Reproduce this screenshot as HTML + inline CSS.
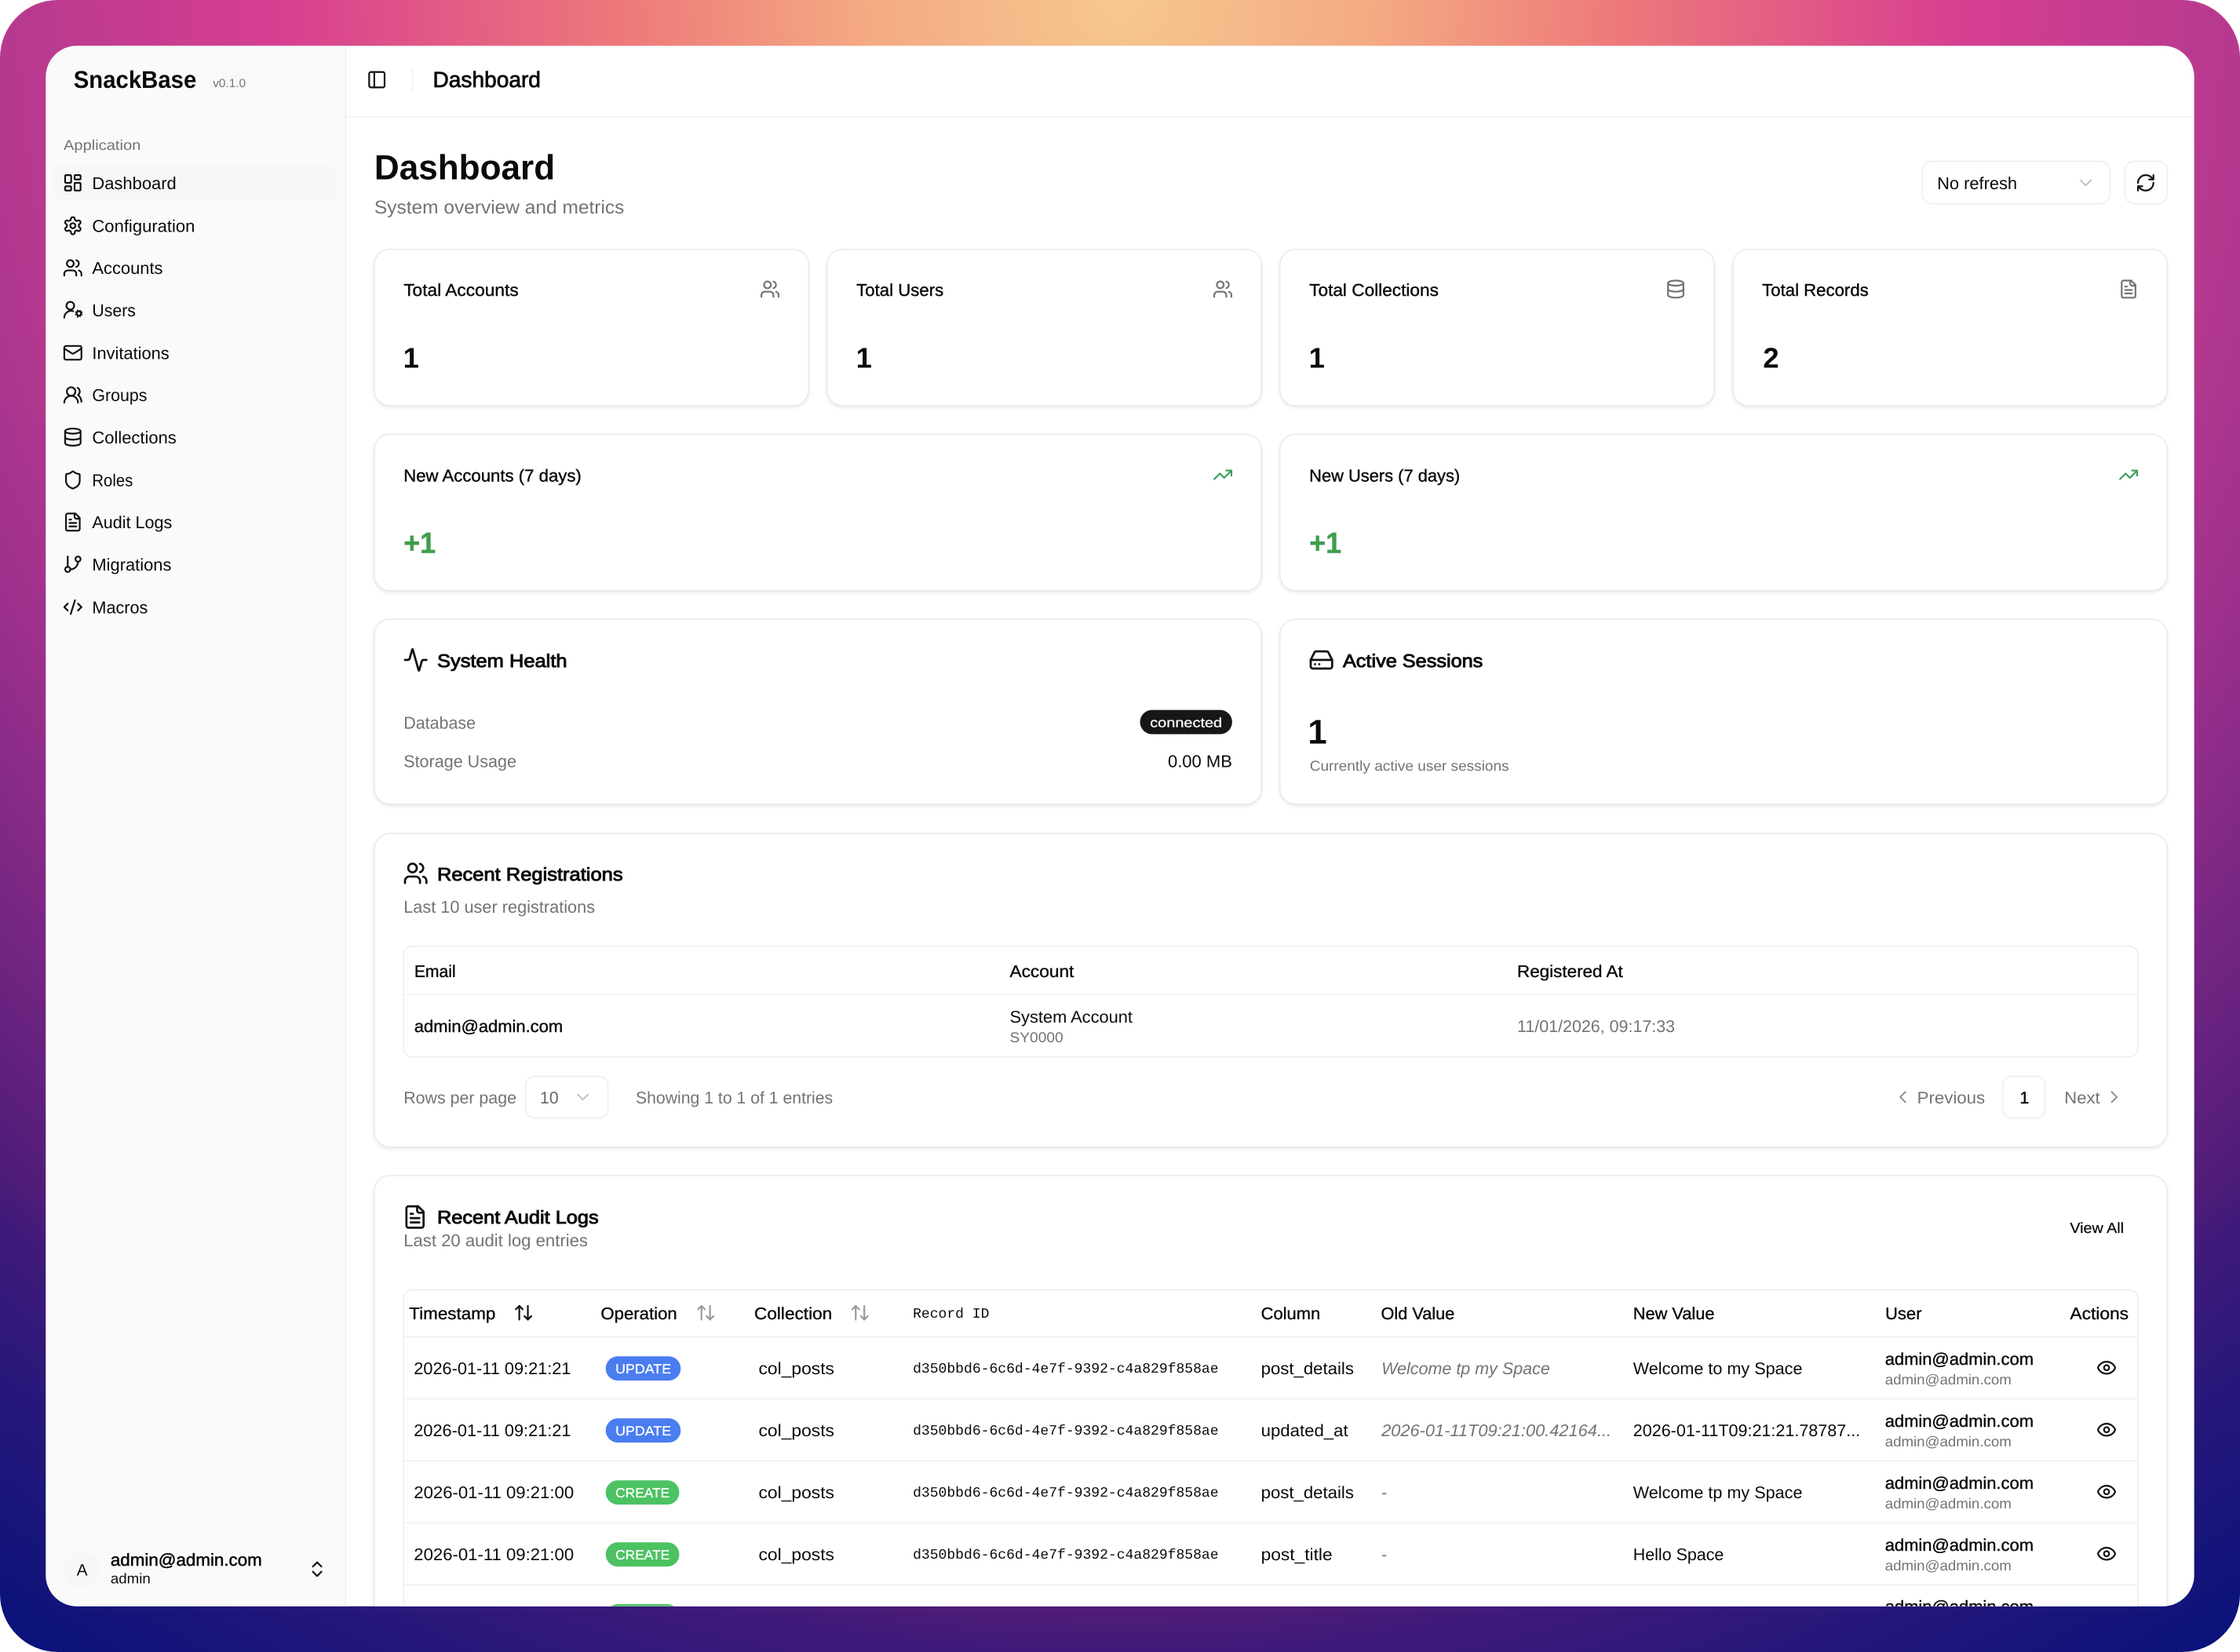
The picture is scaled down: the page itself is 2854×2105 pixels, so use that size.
<!DOCTYPE html>
<html lang="en"><head><meta charset="utf-8"><title>SnackBase Dashboard</title>
<style>
html,body{margin:0;padding:0;background:#fff;width:2854px;height:2105px;overflow:hidden}
svg{display:block}
text{font-family:"Liberation Sans",Arial,sans-serif;font-size:12px;fill:#0a0a0a;text-rendering:geometricPrecision;white-space:pre}
.g{fill:#737373}
.m{stroke:#0a0a0a;stroke-width:.22px}
.h{stroke:#0a0a0a;stroke-width:.5px;font-size:12.8px}
.b{font-weight:700}
.s{font-size:10px}
.mono{font-family:"Liberation Mono",monospace;font-size:9.9px}
.w{fill:#fff;stroke:#fff;stroke-width:.15px;font-size:9.3px}
.i{font-style:italic}
.ic{fill:none;stroke:#111;stroke-width:2;stroke-linecap:round;stroke-linejoin:round}
.ig{fill:none;stroke:#737373;stroke-width:2;stroke-linecap:round;stroke-linejoin:round}
.il{fill:none;stroke:#bcbcbc;stroke-width:1.7;stroke-linecap:round;stroke-linejoin:round}
.igr{fill:none;stroke:#3f9d5f;stroke-width:2;stroke-linecap:round;stroke-linejoin:round}
.card{fill:#fff;stroke:#e8e8e8;stroke-width:.7;filter:drop-shadow(0 1px 1.2px rgba(0,0,0,.09))}
.ctl{fill:#fff;stroke:#ececec;stroke-width:.6;filter:drop-shadow(0 .5px .6px rgba(0,0,0,.05))}
.line{stroke:#ebebeb;stroke-width:.6}
.tb{fill:#fff;stroke:#e8e8e8;stroke-width:.6}
.c{font-size:11.8px}
.th{font-size:11.8px;stroke:#0a0a0a;stroke-width:.2px}
</style></head><body>
<svg xmlns="http://www.w3.org/2000/svg" width="2854" height="2105" viewBox="0 0 1568 1156.5">
<defs>
<radialGradient id="bg" gradientUnits="userSpaceOnUse" cx="784" cy="0" r="1397">
<stop offset="0" stop-color="#f6c88f"/><stop offset=".132" stop-color="#f4a882"/><stop offset=".246" stop-color="#ee7a7a"/><stop offset=".42" stop-color="#d73f90"/><stop offset=".561" stop-color="#b5398f"/><stop offset=".639" stop-color="#9a2f8c"/><stop offset=".808" stop-color="#4f1c78"/><stop offset=".827" stop-color="#401a7a"/><stop offset=".895" stop-color="#25177a"/><stop offset="1" stop-color="#07127a"/>
</radialGradient>
<clipPath id="app"><rect x="32" y="32" width="1504" height="1092.5" rx="22"/></clipPath>
<g id="dash"><rect x="3" y="3" width="7" height="9" rx="1"/><rect x="14" y="3" width="7" height="5" rx="1"/><rect x="14" y="12" width="7" height="9" rx="1"/><rect x="3" y="16" width="7" height="5" rx="1"/></g>
<g id="cog"><path d="M12.22 2h-.44a2 2 0 0 0-2 2v.18a2 2 0 0 1-1 1.73l-.43.25a2 2 0 0 1-2 0l-.15-.08a2 2 0 0 0-2.73.73l-.22.38a2 2 0 0 0 .73 2.73l.15.1a2 2 0 0 1 1 1.72v.51a2 2 0 0 1-1 1.74l-.15.09a2 2 0 0 0-.73 2.73l.22.38a2 2 0 0 0 2.73.73l.15-.08a2 2 0 0 1 2 0l.43.25a2 2 0 0 1 1 1.73V20a2 2 0 0 0 2 2h.44a2 2 0 0 0 2-2v-.18a2 2 0 0 1 1-1.73l.43-.25a2 2 0 0 1 2 0l.15.08a2 2 0 0 0 2.73-.73l.22-.39a2 2 0 0 0-.73-2.73l-.15-.08a2 2 0 0 1-1-1.74v-.5a2 2 0 0 1 1-1.74l.15-.09a2 2 0 0 0 .73-2.73l-.22-.38a2 2 0 0 0-2.73-.73l-.15.08a2 2 0 0 1-2 0l-.43-.25a2 2 0 0 1-1-1.73V4a2 2 0 0 0-2-2z"/><circle cx="12" cy="12" r="3"/></g>
<g id="users"><path d="M16 21v-2a4 4 0 0 0-4-4H6a4 4 0 0 0-4 4v2"/><circle cx="9" cy="7" r="4"/><path d="M22 21v-2a4 4 0 0 0-3-3.87"/><path d="M16 3.13a4 4 0 0 1 0 7.75"/></g>
<g id="ucog"><path d="M2 21a8 8 0 0 1 10.434-7.62"/><circle cx="9" cy="7" r="4.5"/><circle cx="19" cy="16" r="2.5"/><path d="m20.5 12.9-.4.8M18 19.1l-.4.8M22.4 17.4l-.8-.3M16.4 14.9l-.8-.3M22.4 14.6l-.8.3M16.4 17.1l-.8.3M20.4 19.4l-.3-.8M17.9 13.4l-.3-.8"/></g>
<g id="mail"><rect x="2" y="4" width="20" height="16" rx="2"/><path d="m22 7-8.97 5.7a1.94 1.94 0 0 1-2.06 0L2 7"/></g>
<g id="groups"><path d="M18 21a8 8 0 0 0-16 0"/><circle cx="10" cy="8" r="5"/><path d="M22 20c0-3.37-2-6.5-4-8a5 5 0 0 0-.45-8.3"/></g>
<g id="db"><ellipse cx="12" cy="5" rx="9" ry="3"/><path d="M3 5V19A9 3 0 0 0 21 19V5"/><path d="M3 12A9 3 0 0 0 21 12"/></g>
<g id="shield"><path d="M20 13c0 5-3.5 7.5-7.66 8.95a1 1 0 0 1-.67-.01C7.5 20.5 4 18 4 13V6a1 1 0 0 1 1-1c2 0 4.5-1.2 6.24-2.72a1.17 1.17 0 0 1 1.52 0C14.51 3.81 17 5 19 5a1 1 0 0 1 1 1z"/></g>
<g id="file"><path d="M15 2H6a2 2 0 0 0-2 2v16a2 2 0 0 0 2 2h12a2 2 0 0 0 2-2V7Z"/><path d="M14 2v4a2 2 0 0 0 2 2h4"/><path d="M10 9H8"/><path d="M16 13H8"/><path d="M16 17H8"/></g>
<g id="branch"><path d="M6 3v12"/><circle cx="18" cy="6" r="3"/><circle cx="6" cy="18" r="3"/><path d="M18 9a9 9 0 0 1-9 9"/></g>
<g id="code"><path d="m18 16 4-4-4-4"/><path d="m6 8-4 4 4 4"/><path d="m14.5 4-5 16"/></g>
<g id="panel"><rect x="3" y="3" width="18" height="18" rx="2"/><path d="M9 3v18"/></g>
<g id="refresh"><path d="M3 12a9 9 0 0 1 9-9 9.75 9.75 0 0 1 6.74 2.74L21 8"/><path d="M21 3v5h-5"/><path d="M21 12a9 9 0 0 1-9 9 9.75 9.75 0 0 1-6.74-2.74L3 16"/><path d="M8 16H3v5"/></g>
<g id="cd"><path d="m6 9 6 6 6-6"/></g>
<g id="cl"><path d="m15 18-6-6 6-6"/></g>
<g id="cr"><path d="m9 18 6-6-6-6"/></g>
<g id="cud"><path d="m7 15 5 5 5-5"/><path d="m7 9 5-5 5 5"/></g>
<g id="trend"><path d="M22 7 13.5 15.5 8.5 10.5 2 17"/><path d="M16 7h6v6"/></g>
<g id="act"><path d="M22 12h-2.48a2 2 0 0 0-1.93 1.46l-2.35 8.36a.25.25 0 0 1-.48 0L9.24 2.18a.25.25 0 0 0-.48 0l-2.35 8.36A2 2 0 0 1 4.49 12H2"/></g>
<g id="hd"><path d="M22 12H2"/><path d="M5.45 5.11 2 12v6a2 2 0 0 0 2 2h16a2 2 0 0 0 2-2v-6l-3.45-6.89A2 2 0 0 0 16.76 4H7.24a2 2 0 0 0-1.79 1.11z"/><path d="M6 16h.01"/><path d="M10 16h.01"/></g>
<g id="sort"><path d="m21 16-4 4-4-4"/><path d="M17 20V4"/><path d="m3 8 4-4 4 4"/><path d="M7 4v16"/></g>
<g id="eye"><path d="M2.062 12.348a1 1 0 0 1 0-.696 10.75 10.75 0 0 1 19.876 0 1 1 0 0 1 0 .696 10.75 10.75 0 0 1-19.876 0"/><circle cx="12" cy="12" r="3"/></g>
</defs>

<rect x="0" y="0" width="1568" height="1156.5" rx="40.5" fill="url(#bg)"/>

<g clip-path="url(#app)">
<rect x="32" y="32" width="1504" height="1093" fill="#fff"/>
<!-- sidebar -->
<rect x="32" y="32" width="210" height="1093" fill="#fafafa"/>
<line x1="242" y1="32" x2="242" y2="1125" stroke="#ececec" stroke-width=".7"/>
<text x="51.5" y="61.5" style="font-size:17px" class="b" textLength="86" lengthAdjust="spacingAndGlyphs">SnackBase</text>
<rect x="144" y="49" width="34" height="15" rx="7.5" fill="#f8f8f8"/>
<text x="149" y="61" style="font-size:8.4px" class="g" textLength="23" lengthAdjust="spacingAndGlyphs">v0.1.0</text>
<text x="44.5" y="105" class="g" style="font-size:10px" textLength="54" lengthAdjust="spacingAndGlyphs">Application</text>
<rect x="37" y="115" width="198" height="26" rx="6" fill="#f7f7f7"/>
<g class="ic">
<use href="#dash" transform="translate(43.8 120.8) scale(.6)"/>
<use href="#cog" transform="translate(43.8 150.8) scale(.6)"/>
<use href="#users" transform="translate(43.8 180.3) scale(.6)"/>
<use href="#ucog" transform="translate(43.8 209.8) scale(.6)"/>
<use href="#mail" transform="translate(43.8 239.8) scale(.6)"/>
<use href="#groups" transform="translate(43.8 269.3) scale(.6)"/>
<use href="#db" transform="translate(43.8 298.8) scale(.6)"/>
<use href="#shield" transform="translate(43.8 328.8) scale(.6)"/>
<use href="#file" transform="translate(43.8 358.3) scale(.6)"/>
<use href="#branch" transform="translate(43.8 387.8) scale(.6)"/>
<use href="#code" transform="translate(43.8 417.8) scale(.6)"/>
</g>
<text x="64.5" y="132.5" textLength="59" lengthAdjust="spacingAndGlyphs">Dashboard</text>
<text x="64.5" y="162.3" textLength="72" lengthAdjust="spacingAndGlyphs">Configuration</text>
<text x="64.5" y="191.8" textLength="49.5" lengthAdjust="spacingAndGlyphs">Accounts</text>
<text x="64.5" y="221.3" textLength="30.5" lengthAdjust="spacingAndGlyphs">Users</text>
<text x="64.5" y="251.3" textLength="54" lengthAdjust="spacingAndGlyphs">Invitations</text>
<text x="64.5" y="280.8" textLength="38.5" lengthAdjust="spacingAndGlyphs">Groups</text>
<text x="64.5" y="310.3" textLength="59" lengthAdjust="spacingAndGlyphs">Collections</text>
<text x="64.5" y="340.3" textLength="28.5" lengthAdjust="spacingAndGlyphs">Roles</text>
<text x="64.5" y="369.8" textLength="56" lengthAdjust="spacingAndGlyphs">Audit Logs</text>
<text x="64.5" y="399.3" textLength="55.5" lengthAdjust="spacingAndGlyphs">Migrations</text>
<text x="64.5" y="429.3" textLength="39" lengthAdjust="spacingAndGlyphs">Macros</text>
<circle cx="57.5" cy="1099" r="13" fill="#f7f7f7"/>
<text x="53.7" y="1103" style="font-size:11.5px" textLength="7.6" lengthAdjust="spacingAndGlyphs">A</text>
<text x="77.4" y="1096" class="m" style="font-size:12px;stroke-width:.3px" textLength="106" lengthAdjust="spacingAndGlyphs">admin@admin.com</text>
<text x="77.4" y="1108.5" class="s" textLength="28" lengthAdjust="spacingAndGlyphs">admin</text>
<use href="#cud" class="ic" transform="translate(214.8 1091.3) scale(.6)"/>

<!-- header -->
<line x1="242" y1="81.8" x2="1536" y2="81.8" class="line"/>
<use href="#panel" class="ic" transform="translate(256.6 48.6) scale(.6)"/>
<line x1="288.8" y1="48" x2="288.8" y2="64" class="line"/>
<text x="303" y="61" class="m" style="font-size:15.4px;stroke-width:.42px" textLength="75.5" lengthAdjust="spacingAndGlyphs">Dashboard</text>

<text x="262" y="125.6" class="b" style="font-size:24.5px" textLength="126.5" lengthAdjust="spacingAndGlyphs">Dashboard</text>
<text x="262" y="149.4" class="g" style="font-size:13px" textLength="175" lengthAdjust="spacingAndGlyphs">System overview and metrics</text>
<rect x="1345.7" y="113" width="131.3" height="29.5" rx="6.5" class="ctl"/>
<text x="1356" y="132.5" textLength="56" lengthAdjust="spacingAndGlyphs">No refresh</text>
<use href="#cd" class="il" transform="translate(1452.8 120.8) scale(.6)"/>
<rect x="1487.5" y="113" width="29.5" height="29.5" rx="6.5" class="ctl"/>
<use href="#refresh" class="ic" transform="translate(1494.8 120.8) scale(.6)"/>

<!-- stat cards -->
<rect x="262" y="174.5" width="304" height="109.5" rx="11" class="card"/>
<rect x="579" y="174.5" width="304" height="109.5" rx="11" class="card"/>
<rect x="896" y="174.5" width="304" height="109.5" rx="11" class="card"/>
<rect x="1213" y="174.5" width="304" height="109.5" rx="11" class="card"/>
<text x="282.5" y="207" class="m" textLength="80.5" lengthAdjust="spacingAndGlyphs">Total Accounts</text>
<text x="599.5" y="207" class="m" textLength="61" lengthAdjust="spacingAndGlyphs">Total Users</text>
<text x="916.5" y="207" class="m" textLength="90.5" lengthAdjust="spacingAndGlyphs">Total Collections</text>
<text x="1233.5" y="207" class="m" textLength="74.5" lengthAdjust="spacingAndGlyphs">Total Records</text>
<use href="#users" class="ig" transform="translate(531.8 195.2) scale(.6)"/>
<use href="#users" class="ig" transform="translate(848.8 195.2) scale(.6)"/>
<use href="#db" class="ig" transform="translate(1165.8 195.2) scale(.6)"/>
<use href="#file" class="ig" transform="translate(1482.8 195.2) scale(.6)"/>
<text x="282.2" y="257.5" class="b" style="font-size:20px">1</text>
<text x="599.2" y="257.5" class="b" style="font-size:20px">1</text>
<text x="916.2" y="257.5" class="b" style="font-size:20px">1</text>
<text x="1234.2" y="257.5" class="b" style="font-size:20px">2</text>

<rect x="262" y="304" width="621" height="109.5" rx="11" class="card"/>
<rect x="896" y="304" width="621" height="109.5" rx="11" class="card"/>
<text x="282.5" y="337" class="m" textLength="124.5" lengthAdjust="spacingAndGlyphs">New Accounts (7 days)</text>
<text x="916.5" y="337" class="m" textLength="105.5" lengthAdjust="spacingAndGlyphs">New Users (7 days)</text>
<use href="#trend" class="igr" transform="translate(848.8 325.2) scale(.6)"/>
<use href="#trend" class="igr" transform="translate(1482.8 325.2) scale(.6)"/>
<text x="282.5" y="387.2" class="b" style="font-size:20.5px;fill:#3f9d4c;stroke:#3f9d4c;stroke-width:.25px" textLength="22.5" lengthAdjust="spacingAndGlyphs">+1</text>
<text x="916.5" y="387.2" class="b" style="font-size:20.5px;fill:#3f9d4c;stroke:#3f9d4c;stroke-width:.25px" textLength="22.5" lengthAdjust="spacingAndGlyphs">+1</text>

<!-- health -->
<rect x="262" y="433.5" width="621" height="129.5" rx="11" class="card"/>
<rect x="896" y="433.5" width="621" height="129.5" rx="11" class="card"/>
<use href="#act" class="ic" transform="translate(282 453) scale(.75)"/>
<text x="306" y="467" class="h" textLength="91" lengthAdjust="spacingAndGlyphs">System Health</text>
<text x="282.5" y="510" class="g" textLength="50.5" lengthAdjust="spacingAndGlyphs">Database</text>
<text x="282.5" y="537" class="g" textLength="79" lengthAdjust="spacingAndGlyphs">Storage Usage</text>
<rect x="798" y="497" width="64.5" height="17" rx="8.5" fill="#171717"/>
<text x="805" y="509" class="w" textLength="50.5" lengthAdjust="spacingAndGlyphs">connected</text>
<text x="817.5" y="537" textLength="45" lengthAdjust="spacingAndGlyphs">0.00 MB</text>
<use href="#hd" class="ic" transform="translate(916 453) scale(.75)"/>
<text x="940" y="467" class="h" textLength="98" lengthAdjust="spacingAndGlyphs">Active Sessions</text>
<text x="915.5" y="520.5" class="b" style="font-size:24px">1</text>
<text x="916.8" y="539.5" class="g s" textLength="139.5" lengthAdjust="spacingAndGlyphs">Currently active user sessions</text>

<!-- registrations -->
<rect x="262" y="583.5" width="1255" height="219.5" rx="11" class="card"/>
<use href="#users" class="ic" transform="translate(282 602.4) scale(.75)"/>
<text x="306" y="616.4" class="h" textLength="130" lengthAdjust="spacingAndGlyphs">Recent Registrations</text>
<text x="282.5" y="639" class="g" textLength="134" lengthAdjust="spacingAndGlyphs">Last 10 user registrations</text>
<rect x="282.5" y="662.5" width="1214" height="77.5" rx="6" class="tb"/>
<line x1="282.5" y1="696.3" x2="1496.5" y2="696.3" class="line"/>
<text x="290" y="684" class="th" textLength="29" lengthAdjust="spacingAndGlyphs">Email</text>
<text x="706.8" y="684" class="th" textLength="45" lengthAdjust="spacingAndGlyphs">Account</text>
<text x="1062" y="684" class="th" textLength="74" lengthAdjust="spacingAndGlyphs">Registered At</text>
<text x="290" y="722.4" class="c m" textLength="104" lengthAdjust="spacingAndGlyphs">admin@admin.com</text>
<text x="706.8" y="716" class="c" textLength="86" lengthAdjust="spacingAndGlyphs">System Account</text>
<text x="706.8" y="729.5" class="g" style="font-size:10px" textLength="37.5" lengthAdjust="spacingAndGlyphs">SY0000</text>
<text x="1062" y="722.4" class="g c" textLength="110.5" lengthAdjust="spacingAndGlyphs">11/01/2026, 09:17:33</text>
<text x="282.5" y="772.4" class="g c" textLength="79" lengthAdjust="spacingAndGlyphs">Rows per page</text>
<rect x="368" y="753.6" width="57.5" height="29" rx="6" class="ctl"/>
<text x="378" y="772.4" class="c" style="fill:#666" textLength="13" lengthAdjust="spacingAndGlyphs">10</text>
<use href="#cd" class="il" transform="translate(400.8 760.8) scale(.6)"/>
<text x="445" y="772.4" class="g c" textLength="138" lengthAdjust="spacingAndGlyphs">Showing 1 to 1 of 1 entries</text>
<use href="#cl" class="il" transform="translate(1324.8 760.8) scale(.6)" style="stroke:#8a8a8a"/>
<text x="1342" y="772.4" class="g c" textLength="47.5" lengthAdjust="spacingAndGlyphs">Previous</text>
<rect x="1402" y="753.6" width="29.5" height="29" rx="6" class="ctl"/>
<text x="1413.8" y="772.4" class="c m">1</text>
<text x="1445" y="772.4" class="g c" textLength="25" lengthAdjust="spacingAndGlyphs">Next</text>
<use href="#cr" class="il" transform="translate(1472.8 760.8) scale(.6)" style="stroke:#8a8a8a"/>

<!-- audit logs -->
<rect x="262" y="823" width="1255" height="330" rx="11" class="card"/>
<use href="#file" class="ic" transform="translate(281.5 843) scale(.75)"/>
<text x="306" y="856.4" class="h" textLength="113" lengthAdjust="spacingAndGlyphs">Recent Audit Logs</text>
<text x="282.5" y="872.5" class="g" textLength="129" lengthAdjust="spacingAndGlyphs">Last 20 audit log entries</text>
<text x="1449" y="863" class="m" style="font-size:10.3px;stroke-width:.14px" textLength="37.7" lengthAdjust="spacingAndGlyphs">View All</text>
<rect x="282.5" y="903" width="1214" height="248" rx="6" class="tb"/>
<line x1="282.5" y1="935.8" x2="1496.5" y2="935.8" class="line"/>
<line x1="282.5" y1="979.2" x2="1496.5" y2="979.2" class="line"/>
<line x1="282.5" y1="1022.6" x2="1496.5" y2="1022.6" class="line"/>
<line x1="282.5" y1="1066" x2="1496.5" y2="1066" class="line"/>
<line x1="282.5" y1="1109.4" x2="1496.5" y2="1109.4" class="line"/>
<text x="286.4" y="923.5" class="th" textLength="60.5" lengthAdjust="spacingAndGlyphs">Timestamp</text>
<use href="#sort" class="ic" transform="translate(359.3 911.8) scale(.6)"/>
<text x="420.5" y="923.5" class="th" textLength="53.5" lengthAdjust="spacingAndGlyphs">Operation</text>
<use href="#sort" class="ig" style="stroke:#9a9a9a" transform="translate(486.8 911.8) scale(.6)"/>
<text x="528" y="923.5" class="th" textLength="54.5" lengthAdjust="spacingAndGlyphs">Collection</text>
<use href="#sort" class="ig" style="stroke:#9a9a9a" transform="translate(594.8 911.8) scale(.6)"/>
<text x="639" y="922.5" class="mono" textLength="53.5" lengthAdjust="spacingAndGlyphs">Record ID</text>
<text x="882.7" y="923.5" class="th" textLength="41.5" lengthAdjust="spacingAndGlyphs">Column</text>
<text x="966.7" y="923.5" class="th" textLength="51.5" lengthAdjust="spacingAndGlyphs">Old Value</text>
<text x="1143.2" y="923.5" class="th" textLength="57" lengthAdjust="spacingAndGlyphs">New Value</text>
<text x="1319.7" y="923.5" class="th" textLength="25.5" lengthAdjust="spacingAndGlyphs">User</text>
<text x="1449" y="923.5" class="th" textLength="41" lengthAdjust="spacingAndGlyphs">Actions</text>

<!-- row 1 -->
<text x="289.7" y="962" class="c" textLength="110" lengthAdjust="spacingAndGlyphs">2026-01-11 09:21:21</text>
<rect x="424" y="949.5" width="52.5" height="17" rx="8.5" fill="#4a7df0"/>
<text x="430.8" y="961.5" class="w" textLength="39" lengthAdjust="spacingAndGlyphs">UPDATE</text>
<text x="531" y="962" class="c" textLength="53" lengthAdjust="spacingAndGlyphs">col_posts</text>
<text x="639" y="960.9" class="mono" textLength="214" lengthAdjust="spacingAndGlyphs">d350bbd6-6c6d-4e7f-9392-c4a829f858ae</text>
<text x="882.7" y="962" class="c" textLength="65" lengthAdjust="spacingAndGlyphs">post_details</text>
<text x="967" y="962" class="g i c" textLength="118" lengthAdjust="spacingAndGlyphs">Welcome tp my Space</text>
<text x="1143.2" y="962" class="c" textLength="118.5" lengthAdjust="spacingAndGlyphs">Welcome to my Space</text>
<text x="1319.5" y="955.3" class="c m" textLength="104" lengthAdjust="spacingAndGlyphs">admin@admin.com</text>
<text x="1319.5" y="969.2" class="g s" textLength="88.5" lengthAdjust="spacingAndGlyphs">admin@admin.com</text>
<use href="#eye" class="ic" transform="translate(1467.4 950.3) scale(.6)"/>

<!-- row 2 -->
<text x="289.7" y="1005.4" class="c" textLength="110" lengthAdjust="spacingAndGlyphs">2026-01-11 09:21:21</text>
<rect x="424" y="992.9" width="52.5" height="17" rx="8.5" fill="#4a7df0"/>
<text x="430.8" y="1004.9" class="w" textLength="39" lengthAdjust="spacingAndGlyphs">UPDATE</text>
<text x="531" y="1005.4" class="c" textLength="53" lengthAdjust="spacingAndGlyphs">col_posts</text>
<text x="639" y="1004.3" class="mono" textLength="214" lengthAdjust="spacingAndGlyphs">d350bbd6-6c6d-4e7f-9392-c4a829f858ae</text>
<text x="882.7" y="1005.4" class="c" textLength="61" lengthAdjust="spacingAndGlyphs">updated_at</text>
<text x="967" y="1005.4" class="g i c" textLength="161" lengthAdjust="spacingAndGlyphs">2026-01-11T09:21:00.42164...</text>
<text x="1143.2" y="1005.4" class="c" textLength="159" lengthAdjust="spacingAndGlyphs">2026-01-11T09:21:21.78787...</text>
<text x="1319.5" y="998.7" class="c m" textLength="104" lengthAdjust="spacingAndGlyphs">admin@admin.com</text>
<text x="1319.5" y="1012.6" class="g s" textLength="88.5" lengthAdjust="spacingAndGlyphs">admin@admin.com</text>
<use href="#eye" class="ic" transform="translate(1467.4 993.7) scale(.6)"/>

<!-- row 3 -->
<text x="289.7" y="1048.8" class="c" textLength="112" lengthAdjust="spacingAndGlyphs">2026-01-11 09:21:00</text>
<rect x="424" y="1036.3" width="51.5" height="17" rx="8.5" fill="#4cc262"/>
<text x="430.8" y="1048.3" class="w" textLength="38" lengthAdjust="spacingAndGlyphs">CREATE</text>
<text x="531" y="1048.8" class="c" textLength="53" lengthAdjust="spacingAndGlyphs">col_posts</text>
<text x="639" y="1047.7" class="mono" textLength="214" lengthAdjust="spacingAndGlyphs">d350bbd6-6c6d-4e7f-9392-c4a829f858ae</text>
<text x="882.7" y="1048.8" class="c" textLength="65" lengthAdjust="spacingAndGlyphs">post_details</text>
<text x="967" y="1048.8" class="g c">-</text>
<text x="1143.2" y="1048.8" class="c" textLength="118.5" lengthAdjust="spacingAndGlyphs">Welcome tp my Space</text>
<text x="1319.5" y="1042.1" class="c m" textLength="104" lengthAdjust="spacingAndGlyphs">admin@admin.com</text>
<text x="1319.5" y="1056" class="g s" textLength="88.5" lengthAdjust="spacingAndGlyphs">admin@admin.com</text>
<use href="#eye" class="ic" transform="translate(1467.4 1037.1) scale(.6)"/>

<!-- row 4 -->
<text x="289.7" y="1092.2" class="c" textLength="112" lengthAdjust="spacingAndGlyphs">2026-01-11 09:21:00</text>
<rect x="424" y="1079.7" width="51.5" height="17" rx="8.5" fill="#4cc262"/>
<text x="430.8" y="1091.7" class="w" textLength="38" lengthAdjust="spacingAndGlyphs">CREATE</text>
<text x="531" y="1092.2" class="c" textLength="53" lengthAdjust="spacingAndGlyphs">col_posts</text>
<text x="639" y="1091.1" class="mono" textLength="214" lengthAdjust="spacingAndGlyphs">d350bbd6-6c6d-4e7f-9392-c4a829f858ae</text>
<text x="882.7" y="1092.2" class="c" textLength="50" lengthAdjust="spacingAndGlyphs">post_title</text>
<text x="967" y="1092.2" class="g c">-</text>
<text x="1143.2" y="1092.2" class="c" textLength="63.5" lengthAdjust="spacingAndGlyphs">Hello Space</text>
<text x="1319.5" y="1085.5" class="c m" textLength="104" lengthAdjust="spacingAndGlyphs">admin@admin.com</text>
<text x="1319.5" y="1099.4" class="g s" textLength="88.5" lengthAdjust="spacingAndGlyphs">admin@admin.com</text>
<use href="#eye" class="ic" transform="translate(1467.4 1080.5) scale(.6)"/>

<!-- row 5 clipped -->
<rect x="424" y="1123" width="51.5" height="17" rx="8.5" fill="#4cc262"/>
<text x="1319.5" y="1128.9" class="c m" textLength="104" lengthAdjust="spacingAndGlyphs">admin@admin.com</text>
</g>
</svg>
</body></html>
